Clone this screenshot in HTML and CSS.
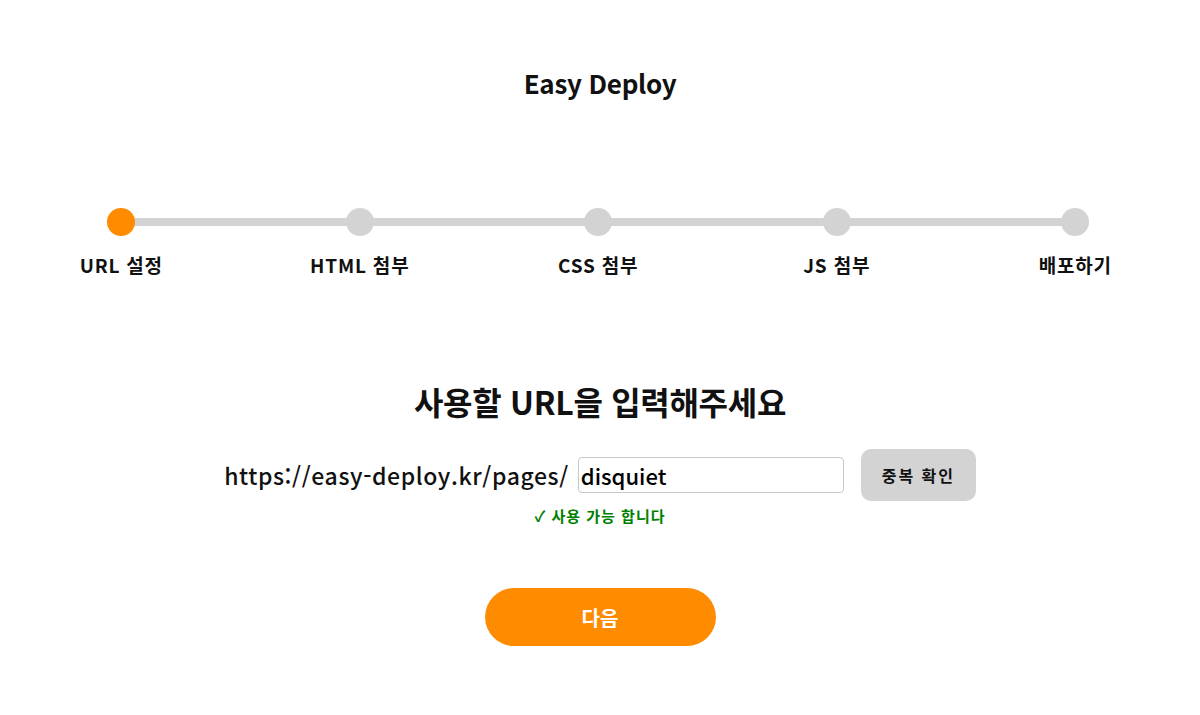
FILE: index.html
```html
<!DOCTYPE html>
<html lang="ko">
<head>
<meta charset="utf-8">
<title>Easy Deploy</title>
<link rel="stylesheet" href="styles.css">
</head>
<body>
<div class="page">
  <h1 class="title">Easy Deploy</h1>

  <div class="stepper">
    <div class="track"></div>
    <div class="step active"><span class="dot"></span><span class="label">URL 설정</span></div>
    <div class="step"><span class="dot"></span><span class="label">HTML 첨부</span></div>
    <div class="step"><span class="dot"></span><span class="label">CSS 첨부</span></div>
    <div class="step"><span class="dot"></span><span class="label">JS 첨부</span></div>
    <div class="step"><span class="dot"></span><span class="label">배포하기</span></div>
  </div>

  <section class="form">
    <h2 class="heading">사용할 URL을 입력해주세요</h2>
    <div class="url-row">
      <span class="prefix">https://easy-deploy.kr/pages/</span>
      <input class="url-input" type="text" value="disquiet">
      <button class="check-btn" type="button">중복 확인</button>
    </div>
    <p class="status">✓ 사용 가능 합니다</p>
    <button class="next-btn" type="button">다음</button>
  </section>
</div>
</body>
</html>
```

FILE: styles.css
```css
* { box-sizing: border-box; }
html, body { margin: 0; padding: 0; background: #fff; }
body {
  font-family: "Noto Sans CJK KR", "Noto Sans", sans-serif;
  color: #111;
}
.page {
  width: 1200px;
  height: 715px;
  overflow: hidden;
}
.title {
  margin: 0;
  padding-top: 63px;
  height: 104px;
  text-align: center;
  font-size: 26px;
  line-height: 40px;
  font-weight: 700;
  letter-spacing: -0.3px;
}
.stepper {
  position: relative;
  display: grid;
  grid-template-columns: repeat(5, 238.5px);
  margin: 104px 0 0 2px;
  width: 1192.5px;
}
.track {
  position: absolute;
  left: 119px;
  right: 119px;
  top: 10px;
  height: 8px;
  background: #d3d3d3;
}
.step {
  display: flex;
  flex-direction: column;
  align-items: center;
  position: relative;
}
.dot {
  width: 28px;
  height: 28px;
  border-radius: 50%;
  background: #d3d3d3;
}
.step.active .dot { background: #ff8c00; }
.label {
  margin-top: 16px;
  font-size: 19px;
  line-height: 26px;
  font-weight: 700;
  letter-spacing: 0.8px;
}
.form {
  display: flex;
  flex-direction: column;
  align-items: center;
  margin-top: 100px;
}
.heading {
  margin: 0;
  font-size: 32px;
  line-height: 46px;
  font-weight: 700;
  letter-spacing: -0.3px;
}
.url-row {
  display: flex;
  align-items: center;
  margin-top: 25px;
}
.prefix {
  font-size: 23px;
  font-weight: 500;
  letter-spacing: 0.6px;
  margin-right: 9px;
}
.url-input {
  width: 266px;
  height: 36px;
  border: 1px solid #c8c8c8;
  border-radius: 4px;
  padding: 0 2px;
  font-family: inherit;
  font-size: 22px;
  font-weight: 500;
  color: #000;
  outline: none;
}
.check-btn {
  margin-left: 17px;
  width: 115px;
  height: 52px;
  border: none;
  border-radius: 10px;
  background: #d3d3d3;
  font-family: inherit;
  font-size: 16px;
  font-weight: 700;
  color: #111;
  letter-spacing: 2px;
}
.status {
  margin: 3px 0 0 0;
  font-size: 15px;
  line-height: 24px;
  font-weight: 700;
  color: #008000;
  letter-spacing: 1px;
}
.next-btn {
  margin-top: 60px;
  width: 231px;
  height: 58px;
  border: none;
  border-radius: 29px;
  background: #ff8c00;
  color: #fff;
  font-family: inherit;
  font-size: 20px;
  font-weight: 700;
}
```
